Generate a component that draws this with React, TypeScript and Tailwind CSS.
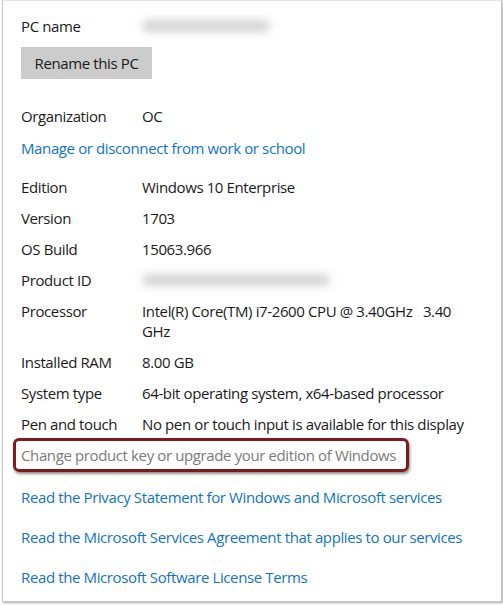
import React from 'react';

const font = { fontFamily: '"Segoe UI", "Open Sans", "Noto Sans", sans-serif' };

interface RowProps {
  label: string;
  children: React.ReactNode;
  className?: string;
}

const Row: React.FC<RowProps> = ({ label, children, className = '' }) => (
  <div className={`flex text-[15px] leading-[20px] text-[#1a1a1a] ${className}`}>
    <div className="w-[121px] shrink-0">{label}</div>
    <div className="flex-1">{children}</div>
  </div>
);

const Blur: React.FC<{ width: string }> = ({ width }) => (
  <div className="h-[20px] flex items-center">
    <div className={`${width} h-[12px] rounded-full bg-[#d4d4d4] blur-[4px]`} />
  </div>
);

const Link: React.FC<{ children: React.ReactNode; className?: string }> = ({ children, className = '' }) => (
  <div className={`text-[15px] leading-[20px] text-[#0f73cc] ${className}`}>{children}</div>
);

export default function App() {
  return (
    <div className="w-[503px] h-[605px] bg-white" style={font}>
      <div className="ml-[2px] w-[500px] h-[602px] border border-[#c8c8c8] border-t-[#e4e4e4] shadow-[1px_1px_2px_rgba(0,0,0,0.35)] pl-[18px] pt-[15px] tracking-[-0.38px]">
        <Row label="PC name">
          <Blur width="w-[128px]" />
        </Row>
        <button className="mt-[11px] w-[131px] h-[32px] bg-[#cccccc] text-[15px] text-[#1a1a1a] tracking-[-0.38px]">
          Rename this PC
        </button>

        <Row label="Organization" className="mt-[27px]">OC</Row>
        <Link className="mt-[12px]">Manage or disconnect from work or school</Link>

        <Row label="Edition" className="mt-[19px]">Windows 10 Enterprise</Row>
        <Row label="Version" className="mt-[11px]">1703</Row>
        <Row label="OS Build" className="mt-[11px]">15063.966</Row>
        <Row label="Product ID" className="mt-[11px]">
          <Blur width="w-[188px]" />
        </Row>
        <Row label="Processor" className="mt-[11px]">
          <span className="whitespace-pre">Intel(R) Core(TM) i7-2600 CPU @ 3.40GHz   3.40</span>
          <br />
          GHz
        </Row>
        <Row label="Installed RAM" className="mt-[11px]">8.00 GB</Row>
        <Row label="System type" className="mt-[11px]">64-bit operating system, x64-based processor</Row>
        <Row label="Pen and touch" className="mt-[11px]">No pen or touch input is available for this display</Row>

        <div className="mt-[4px] -ml-[8px] w-[396px] h-[34px] border-[3px] border-[#7d1a20] rounded-[6px] shadow-[1px_2px_3px_rgba(0,0,0,0.45)] flex items-center pl-[5px]">
          <span className="text-[15px] leading-[20px] text-[#7a7a7a]">Change product key or upgrade your edition of Windows</span>
        </div>

        <Link className="mt-[15px]">Read the Privacy Statement for Windows and Microsoft services</Link>
        <Link className="mt-[20px]">Read the Microsoft Services Agreement that applies to our services</Link>
        <Link className="mt-[20px]">Read the Microsoft Software License Terms</Link>
      </div>
    </div>
  );
}
